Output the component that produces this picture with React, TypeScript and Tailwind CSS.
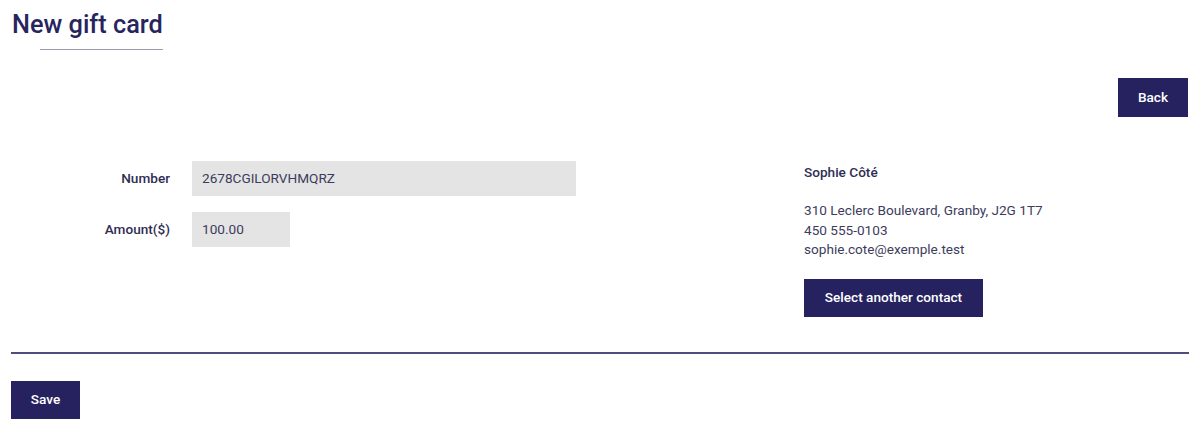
import React from 'react';

export default function App() {
  const contact = {
    name: 'Sophie Côté',
    address: '310 Leclerc Boulevard, Granby, J2G 1T7',
    phone: '450 555-0103',
    email: 'sophie.cote@exemple.test',
  };

  return (
    <div className="w-[1200px] h-[432px] bg-white font-['Roboto',sans-serif] text-[#3d3c5c]">
      {/* Header */}
      <div className="pl-3 pt-[10px]">
        <h1 className="text-[25.3px] leading-[30px] font-medium text-[#27255e]">New gift card</h1>
        <div className="ml-7 mt-[9px] w-[123px] h-px bg-[#9a9ab5]"></div>
      </div>

      <div className="flex justify-end pr-3 mt-[28px]">
        <button className="w-[70px] h-[39px] bg-[#25225f] text-white text-[13.6px] font-medium">Back</button>
      </div>

      {/* Form + contact */}
      <div className="flex mt-[44px]">
        <div className="w-[804px] flex flex-col gap-4">
          <div className="flex items-center">
            <label className="w-[170px] text-right text-[13.6px] font-medium text-[#2f2d55]">Number</label>
            <div className="ml-[22px] w-[384px] h-[35px] bg-[#e4e4e4] flex items-center px-[10px] text-[13.6px]">
              2678CGILORVHMQRZ
            </div>
          </div>
          <div className="flex items-center">
            <label className="w-[170px] text-right text-[13.6px] font-medium text-[#2f2d55]">Amount($)</label>
            <div className="ml-[22px] w-[98px] h-[35px] bg-[#e4e4e4] flex items-center px-[10px] text-[13.6px]">
              100.00
            </div>
          </div>
        </div>

        <div className="mt-[1px] flex flex-col text-[13.6px]">
          <p className="font-medium text-[#2f2d55] leading-5">{contact.name}</p>
          <div className="mt-[19px] leading-[19.5px]">
            <p>{contact.address}</p>
            <p>{contact.phone}</p>
            <p>{contact.email}</p>
          </div>
          <button className="mt-[19px] w-[179px] h-[38px] bg-[#25225f] text-white text-[13.6px] font-medium">
            Select another contact
          </button>
        </div>
      </div>

      <div className="mx-[11px] mt-[35px] h-[2px] bg-[#4f4d7c]"></div>

      <div className="px-[11px] mt-[27px]">
        <button className="w-[69px] h-[38px] bg-[#25225f] text-white text-[13.6px] font-medium">Save</button>
      </div>
    </div>
  );
}
